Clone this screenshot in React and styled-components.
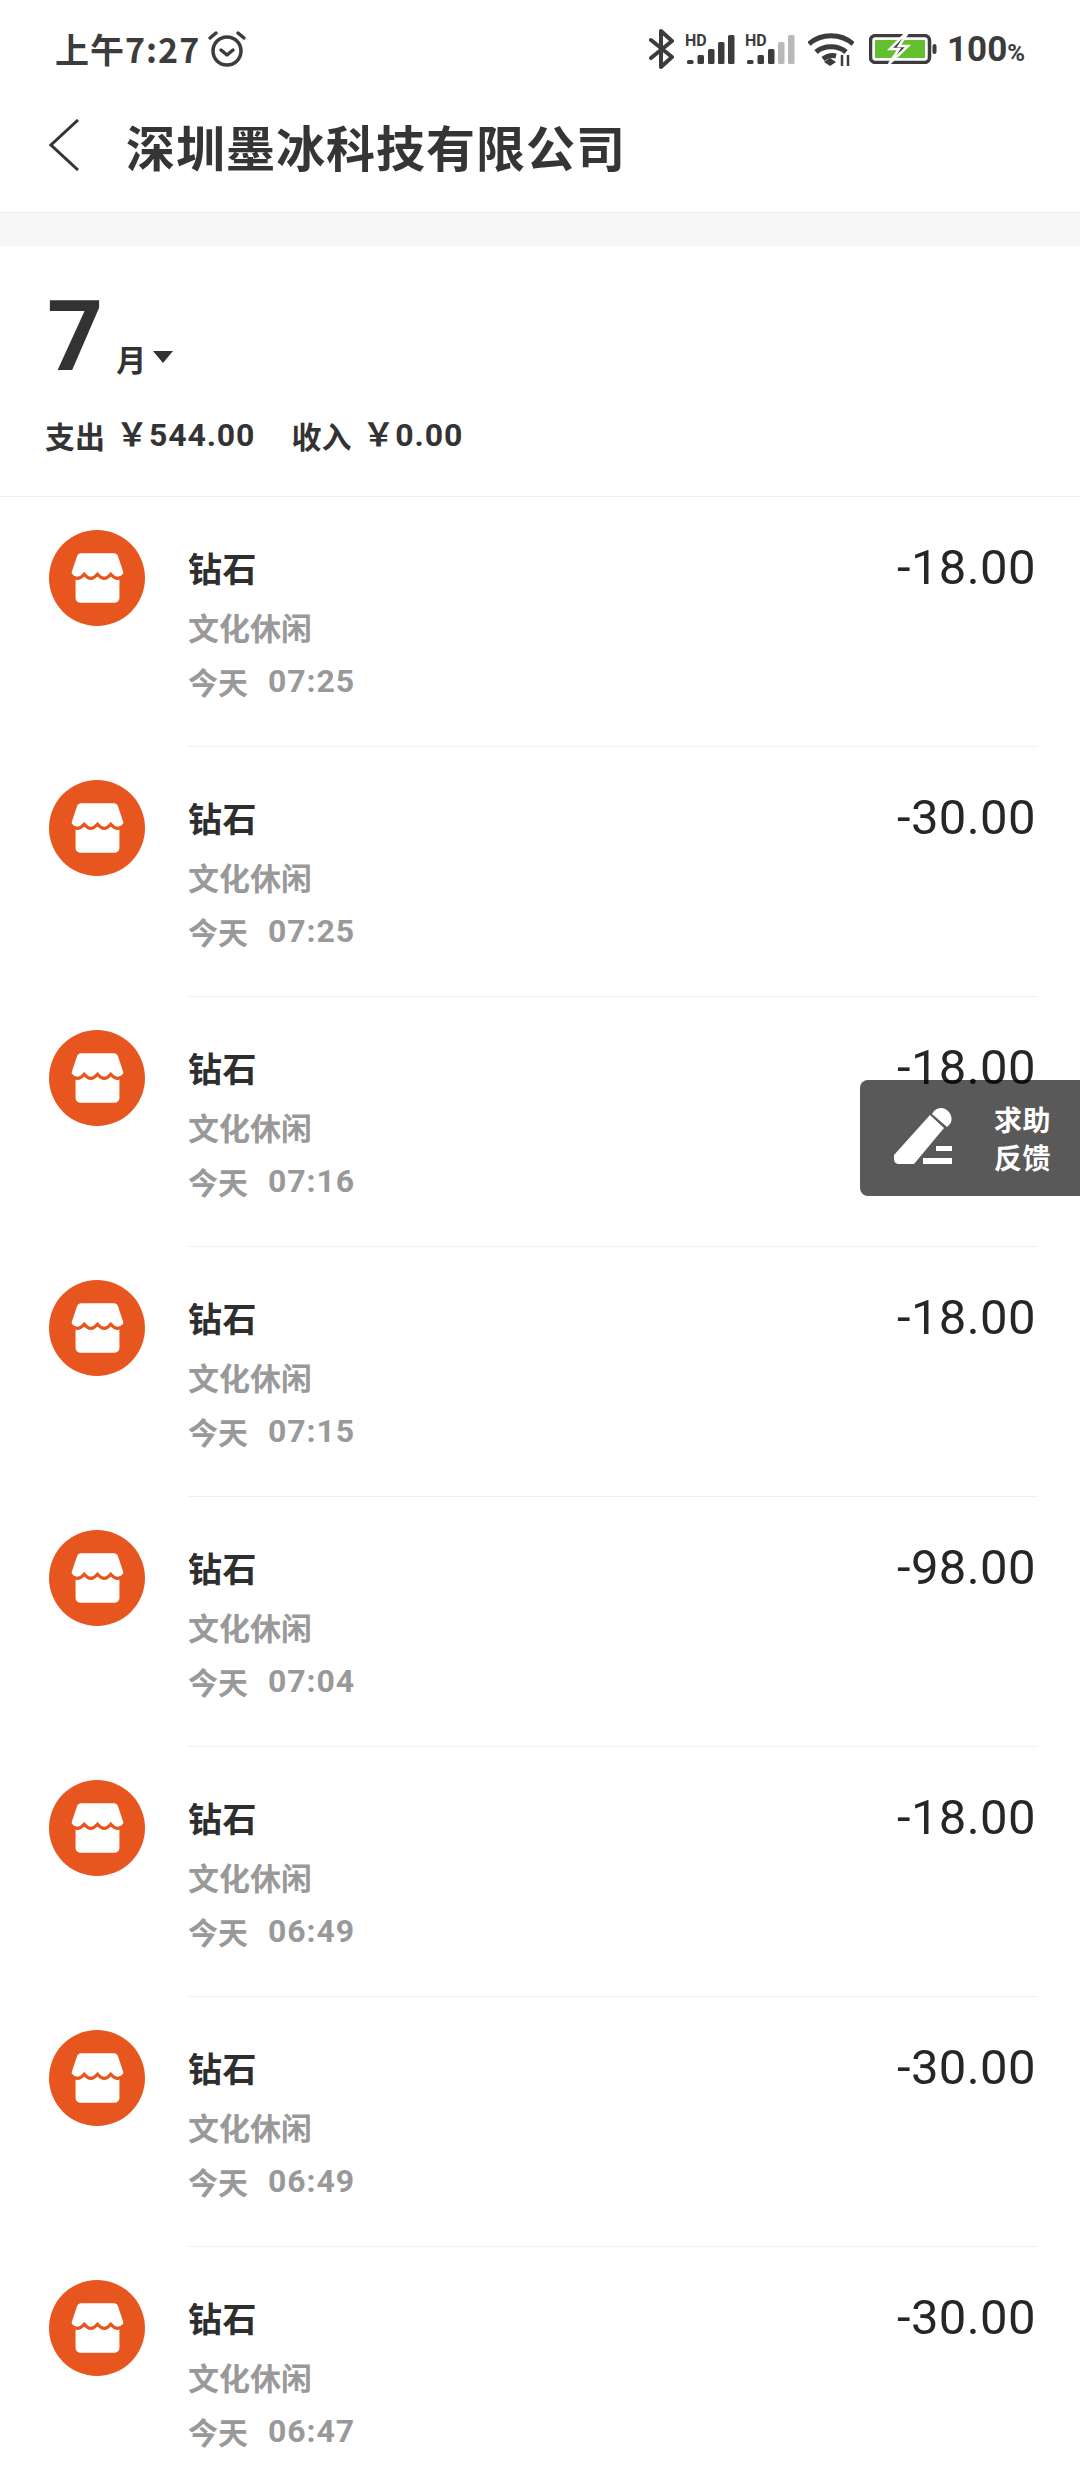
import React from "react";
import styled, { createGlobalStyle } from "styled-components";

const CJK = `"Noto Sans CJK SC", "Noto Sans", sans-serif`;
const NUM = `Roboto, "Noto Sans CJK SC", sans-serif`;

const Global = createGlobalStyle`
  html, body { margin: 0; padding: 0; background: #fff; }
  * { box-sizing: border-box; }
`;

const Page = styled.div`
  position: relative;
  width: 1080px;
  height: 2484px;
  overflow: hidden;
  background: #fff;
  color: #333;
  font-family: ${CJK};
`;

const StatusBar = styled.div`
  height: 98px;
  padding: 0 55px 0 55px;
  display: flex;
  align-items: center;
  justify-content: space-between;
`;
const StatusLeft = styled.div`
  display: flex;
  align-items: center;
  gap: 7px;
`;
const Clock = styled.span`
  font: 700 34px/1 ${CJK};
  color: #3c3c3c;
  letter-spacing: 1px;
`;
const StatusRight = styled.div`
  display: flex;
  align-items: center;
`;
const Icon = styled.svg`
  display: block;
  flex: none;
  margin-left: ${(p) => p.$ml || 0}px;
`;
const Percent = styled.span`
  margin-left: 10px;
  font: 700 35px/1 ${NUM};
  color: #3c3c3c;
  small { font-size: 24px; font-weight: 700; }
`;

const NavBar = styled.div`
  height: 115px;
  padding: 0 0 20px 49px;
  display: flex;
  align-items: center;
  border-bottom: 1px solid #ececec;
`;
const Title = styled.h1`
  margin: 0 0 0 47px;
  font: 700 49px/1 ${CJK};
  letter-spacing: 1px;
  color: #353535;
`;
const Band = styled.div`
  height: 33px;
  background: #f7f7f7;
`;

const Summary = styled.section`
  height: 251px;
  padding: 0 45px;
  border-bottom: 1px solid #eeeeee;
  display: flex;
  flex-direction: column;
`;
const MonthRow = styled.div`
  height: 141px;
  display: flex;
  align-items: flex-end;
  padding-left: 2px;
`;
const MonthNumber = styled.span`
  font: 700 98px/1 ${NUM};
  color: #333;
  margin-bottom: 1px;
`;
const MonthUnit = styled.span`
  margin-left: 13px;
  font: 700 30px/1 ${CJK};
  margin-bottom: 14px;
  color: #333;
`;
const Caret = styled.span`
  width: 0;
  height: 0;
  margin: 0 0 24px 7px;
  border-left: 10px solid transparent;
  border-right: 10px solid transparent;
  border-top: 12px solid #333;
`;
const Totals = styled.div`
  margin-top: 29px;
  display: flex;
  align-items: center;
  gap: 36px;
`;
const Total = styled.div`
  display: flex;
  align-items: center;
  font: 700 30px/1.2 ${CJK};
  color: #333;
`;
const Money = styled.span`
  margin-left: 11px;
  font: 700 32px/1.2 ${NUM};
  letter-spacing: 0.9px;
`;

const List = styled.div`
  display: flex;
  flex-direction: column;
`;
const Row = styled.div`
  height: 250px;
  padding: 33px 0 0 49px;
  display: flex;
  align-items: flex-start;
`;
const Avatar = styled.div`
  width: 96px;
  height: 96px;
  flex: none;
  border-radius: 50%;
  background: #e8561f;
  display: flex;
  align-items: center;
  justify-content: center;
`;
const Body = styled.div`
  flex: none;
  width: 850px;
  height: 217px;
  margin-left: 43px;
  display: flex;
  justify-content: space-between;
  align-items: flex-start;
  border-bottom: ${(p) => (p.$last ? "none" : "1px solid #f0f0f0")};
`;
const Info = styled.div`
  display: flex;
  flex-direction: column;
`;
const Name = styled.div`
  font: 700 34px/1 ${CJK};
  letter-spacing: 0.5px;
  color: #2e2e2e;
  margin-top: 21px;
`;
const Category = styled.div`
  margin-top: 26px;
  font: 700 31px/1 ${CJK};
  color: #999;
`;
const Time = styled.div`
  margin-top: 23px;
  display: flex;
  align-items: center;
  gap: 20px;
  font: 700 30px/1 ${CJK};
  color: #999;
`;
const Clocktime = styled.span`
  font: 700 32px/1 ${NUM};
  letter-spacing: 0.9px;
`;
const Amount = styled.div`
  margin: 9px 2px 0 0;
  font: 400 49px/1.2 ${NUM};
  color: #262626;
  letter-spacing: 0.4px;
`;

const Feedback = styled.div`
  position: absolute;
  left: 860px;
  top: 1080px;
  width: 220px;
  height: 116px;
  background: rgba(0, 0, 0, 0.65);
  border-radius: 8px 0 0 8px;
  display: flex;
  align-items: center;
  padding-left: 33px;
`;
const FeedbackText = styled.div`
  margin-left: 41px;
  font: 700 28px/38px ${CJK};
  letter-spacing: 0.5px;
  color: #fff;
  width: 60px;
`;

const rows = [
  ["-18.00", "07:25"],
  ["-30.00", "07:25"],
  ["-18.00", "07:16"],
  ["-18.00", "07:15"],
  ["-98.00", "07:04"],
  ["-18.00", "06:49"],
  ["-30.00", "06:49"],
  ["-30.00", "06:47"],
];

const Signal = ({ dim, ml }) => {
  const bars = [
    [2, 27],
    [12.5, 22],
    [23, 16],
    [33, 9],
    [43, 2],
  ];
  return (
    <Icon $ml={ml} width="50" height="38" viewBox="0 -3 50 38">
      <text x="0" y="12.500" fontFamily="Roboto, sans-serif" fontWeight="700" fontSize="16" fill="#3c3c3c">HD</text>
      {bars.map(([x, y], i) => (
        <rect key={x} x={x} y={y} width="6.500" height={31 - y} rx="1.500" fill={i >= dim ? "#b9b9b9" : "#3c3c3c"} />
      ))}
    </Icon>
  );
};

const Shop = () => (
  <svg width="53" height="52" viewBox="0 0 58 54">
    <path fill="#fff" d="M11 0h36c2 0 3.500 1 4.300 3L57 20c1 3-1 5-3 5H4c-2 0-4-2-3-5L6.700 3C7.500 1 9 0 11 0z" />
    <path fill="#fff" d="M5 24h48v25c0 3-2 5-5 5H10c-3 0-5-2-5-5z" />
    <path fill="none" stroke="#e8561f" strokeWidth="3.500" d="M-1 23Q7 32 14.500 23Q21.500 32 29 23Q36.500 32 43.500 23Q51 32 59 23" />
  </svg>
);

export default function App() {
  return (
    <Page>
      <Global />
      <StatusBar>
        <StatusLeft>
          <Clock>上午7:27</Clock>
          <Icon width="40" height="40" viewBox="0 0 40 40" fill="none" stroke="#3c3c3c" strokeLinecap="round">
            <circle cx="20" cy="22" r="14" strokeWidth="3.500" />
            <path d="M14 21l6 5 6-5" strokeWidth="3.500" strokeLinejoin="round" />
            <path d="M3 9l6-5M37 9l-6-5" strokeWidth="3.500" />
          </Icon>
        </StatusLeft>
        <StatusRight>
          <Icon width="26" height="40" viewBox="0 0 26 40" fill="none" stroke="#3c3c3c" strokeWidth="4" strokeLinejoin="round" strokeLinecap="round">
            <path d="M2 11l21 17-11 10V2l11 10L2 29" />
          </Icon>
          <Signal dim={5} ml={10} />
          <Signal dim={3} ml={10} />
          <Icon $ml={13} width="46" height="34" viewBox="0 0 46 34" fill="none" stroke="#3c3c3c" strokeWidth="5">
            <path d="M1 12c12-11 32-11 44 0" />
            <path d="M8 20c8-7 22-7 30 0" />
            <path d="M15 27c4-3 9-4 13-3" />
            <path fill="#3c3c3c" stroke="none" d="M16 30l6-4 6 4-6 4z" />
            <path strokeWidth="2.500" d="M34 23v11M40 23v11" />
          </Icon>
          <Icon $ml={15} width="68" height="30" viewBox="0 0 68 30">
            <rect x="1.500" y="1.500" width="59" height="27" rx="5" fill="none" stroke="#3c3c3c" strokeWidth="3.500" />
            <rect x="6" y="6" width="50" height="18" rx="1" fill="#62c02e" />
            <rect x="63.500" y="10" width="4" height="10" rx="2" fill="#3c3c3c" />
            <path d="M36 0L21 15h9L20 30l19-18h-9l8-12z" fill="#3c3c3c" stroke="#fff" strokeWidth="2.500" />
          </Icon>
          <Percent>100<small>%</small></Percent>
        </StatusRight>
      </StatusBar>
      <NavBar>
        <Icon width="30" height="52" viewBox="0 0 30 52" fill="none" stroke="#353535" strokeWidth="3">
          <path d="M29 1L2 26l27 25" />
        </Icon>
        <Title>深圳墨冰科技有限公司</Title>
      </NavBar>
      <Band />
      <Summary>
        <MonthRow>
          <MonthNumber>7</MonthNumber>
          <MonthUnit>月</MonthUnit>
          <Caret />
        </MonthRow>
        <Totals>
          <Total>支出<Money>￥544.00</Money></Total>
          <Total>收入<Money>￥0.00</Money></Total>
        </Totals>
      </Summary>
      <List>
        {rows.map(([amount, time], i) => (
          <Row key={i}>
            <Avatar><Shop /></Avatar>
            <Body $last={i === rows.length - 1}>
              <Info>
                <Name>钻石</Name>
                <Category>文化休闲</Category>
                <Time>今天<Clocktime>{time}</Clocktime></Time>
              </Info>
              <Amount>{amount}</Amount>
            </Body>
          </Row>
        ))}
      </List>
      <Feedback>
        <Icon width="60" height="60" viewBox="0 0 60 60" fill="#fff">
          <path d="M1 47L37 7l14 13-30 36H6c-3 0-5-2-5-5z" />
          <path d="M41 3c4-4 10-4 14 0 4 4 5 10 1 14l-2 2-15-13z" />
          <rect x="30" y="50" width="29" height="6" />
          <rect x="43" y="38" width="16" height="5" />
        </Icon>
        <FeedbackText>求助 反馈</FeedbackText>
      </Feedback>
    </Page>
  );
}
